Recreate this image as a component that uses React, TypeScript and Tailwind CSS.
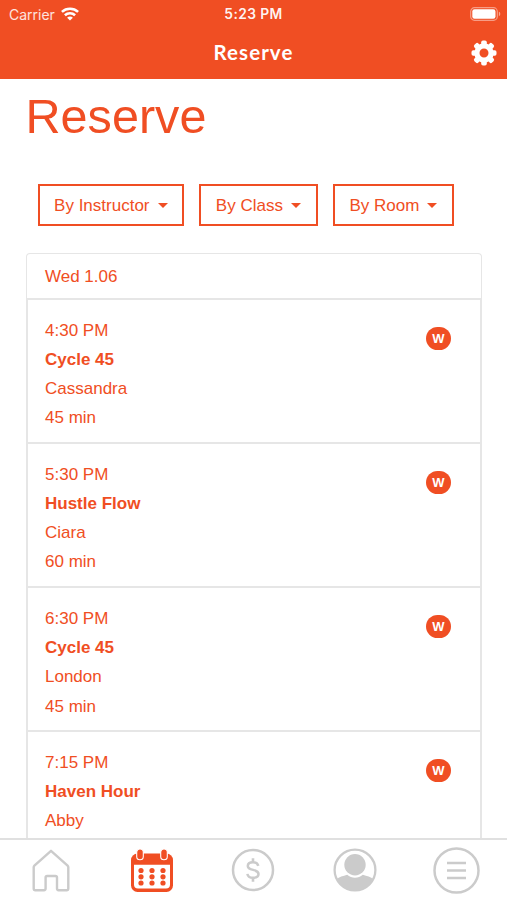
import { clsx } from "clsx";

interface ClassSession {
  time: string;
  name: string;
  instructor: string;
  duration?: string;
}

const sessions: ClassSession[] = [
  { time: "4:30 PM", name: "Cycle 45", instructor: "Cassandra", duration: "45 min" },
  { time: "5:30 PM", name: "Hustle Flow", instructor: "Ciara", duration: "60 min" },
  { time: "6:30 PM", name: "Cycle 45", instructor: "London", duration: "45 min" },
  { time: "7:15 PM", name: "Haven Hour", instructor: "Abby" },
];

const filters = [
  { label: "By Instructor", width: "w-[146.6px]" },
  { label: "By Class", width: "w-[118.6px]" },
  { label: "By Room", width: "w-[121.6px]" },
];

const WifiIcon = () => (
  <svg className="w-[18px] h-[14px]" viewBox="0 0 18 14" fill="none" stroke="white" strokeWidth="2.6">
    <path d="M0.9 4.9C5.5.7 12.5.7 17.1 4.9" />
    <path d="M3.9 8.3C6.8 5.6 11.2 5.6 14.1 8.3" />
    <path d="M9 13.6 6.1 10.7C7.8 9.2 10.2 9.2 11.9 10.7Z" fill="white" stroke="none" />
  </svg>
);

const BatteryIcon = () => (
  <svg className="w-[31px] h-[14px]" viewBox="0 0 31 14" fill="none">
    <rect x="0.7" y="0.7" width="26.6" height="12.6" rx="3.8" stroke="white" strokeOpacity=".45" strokeWidth="1.2" />
    <rect x="2.3" y="2.3" width="23.2" height="9.4" rx="2.2" fill="white" />
    <path d="M28.9 4.8C30.7 5.4 30.7 8.6 28.9 9.2Z" fill="white" fillOpacity=".5" />
  </svg>
);

const GearIcon = () => (
  <svg className="w-[26px] h-[26px]" viewBox="0 0 26 26">
    <g fill="white">
      {[0, 45, 90, 135].map((angle) => (
        <rect key={angle} x="10.2" y="0.5" width="5.6" height="25" rx="1.8" transform={`rotate(${angle} 13 13)`} />
      ))}
    </g>
    <circle cx="13" cy="13" r="7.1" fill="#f04e23" stroke="white" strokeWidth="5.2" />
  </svg>
);

const HomeIcon = () => (
  <svg className="w-[38px] h-[43px]" viewBox="0 0 38 43" fill="none" stroke="#cbcbcb" strokeWidth="2.4" strokeLinejoin="round">
    <path d="M19 1.8 35.6 16.6Q36.3 17.3 36.3 18.3V39.5Q36.3 41.2 34.6 41.2H26.6Q25 41.2 25 39.6V28.6Q25 27 23.4 27H15.2Q13.6 27 13.6 28.6V39.6Q13.6 41.2 12 41.2H3.4Q1.7 41.2 1.7 39.5V18.3Q1.7 17.3 2.4 16.6Z" />
  </svg>
);

const CalendarIcon = () => (
  <svg className="w-[42px] h-[43px]" viewBox="0 0 42 43">
    <rect x="0" y="4.6" width="42" height="38.4" rx="6.5" fill="#f04e23" />
    <path d="M3 15.8H39V35.5Q39 39.6 35 39.6H7Q3 39.6 3 35.5Z" fill="white" />
    {[9, 33].map((x) => (
      <rect key={x} x={x - 3.3} y="0" width="6.6" height="10.8" rx="3.3" fill="#f04e23" stroke="white" strokeWidth="1.1" />
    ))}
    <g fill="#f04e23">
      {[21.5, 27.8, 34].map((y) =>
        [10, 21, 32].map((x) => <circle key={`${x}-${y}`} cx={x} cy={y} r="2.6" />),
      )}
    </g>
  </svg>
);

const DollarIcon = () => (
  <svg className="w-[44px] h-[44px]" viewBox="0 0 44 44" fill="none" stroke="#cbcbcb" strokeWidth="2.5">
    <circle cx="22" cy="22" r="20" />
    <path d="M22 10.3V14.5M22 29.5V33.7" strokeWidth="2.6" />
    <path d="M27.3 17.8C26.6 15.4 24.6 14.2 22 14.2C19 14.2 16.8 15.6 16.8 17.9C16.8 23.3 27.5 20.5 27.5 26C27.5 28.4 25.2 29.8 22 29.8C18.9 29.8 16.8 28.5 16.4 25.9" />
  </svg>
);

const ProfileIcon = () => (
  <svg className="w-[44px] h-[44px]" viewBox="0 0 44 44">
    <circle cx="22" cy="22" r="20.4" fill="none" stroke="#cbcbcb" strokeWidth="2.3" />
    <circle cx="22" cy="16.8" r="10.7" fill="#cbcbcb" />
    <path d="M3.4 31.5C6.2 28.8 10 27.9 14.2 26.7C18.7 30.7 25.3 30.7 29.8 26.7C34 27.9 37.8 28.8 40.6 31.5A21 21 0 0 1 3.4 31.5Z" fill="#cbcbcb" />
  </svg>
);

const MenuIcon = () => (
  <svg className="w-[47px] h-[47px]" viewBox="0 0 47 47" fill="none" stroke="#cbcbcb" strokeWidth="2.5">
    <circle cx="23.5" cy="23.5" r="22" />
    <path d="M14 16.1H33M14 23.5H33M14 30.9H33" />
  </svg>
);

const Header = () => (
  <header className="h-[79px] shrink-0 bg-[#f04e23] text-white">
    <div className="grid h-[28px] grid-cols-3 items-center pl-[9px] pr-[6px] font-[Inter]">
      <div className="flex items-center gap-[6px] text-[14px] text-white/85">
        Carrier <WifiIcon />
      </div>
      <div className="pr-[3px] text-center text-[13.8px] font-semibold tracking-[0.4px] text-white/95">5:23 PM</div>
      <div className="flex justify-end"><BatteryIcon /></div>
    </div>
    <div className="grid h-[49px] grid-cols-3 items-center pr-[10px]">
      <h2 className="col-start-2 pl-[10px] text-center font-[Lato] text-[20.5px] font-bold tracking-[1.05px]">Reserve</h2>
      <button className="flex justify-end" aria-label="Settings"><GearIcon /></button>
    </div>
  </header>
);

const SessionRow = ({ session }: { session: ClassSession }) => (
  <li className="flex h-[144.1px] shrink-0 justify-between border-x-2 border-t-2 border-[#e6e6e6] pl-[17.5px] pr-[29px] pt-[15.5px]">
    <div className="leading-[29.3px]">
      <p>{session.time}</p>
      <p className="font-bold">{session.name}</p>
      <p>{session.instructor}</p>
      {session.duration && <p>{session.duration}</p>}
    </div>
    <span className="mt-[11.5px] flex h-[22.5px] w-[25px] items-center justify-center rounded-full bg-[#f04e23] text-[13px] font-bold text-white">
      W
    </span>
  </li>
);

const tabs = [
  { label: "Home", icon: <HomeIcon /> },
  { label: "Reserve", icon: <CalendarIcon />, active: true },
  { label: "Buy", icon: <DollarIcon /> },
  { label: "Profile", icon: <ProfileIcon /> },
  { label: "Menu", icon: <MenuIcon /> },
];

const App: React.FC = () => {
  return (
    <div className="flex h-[900px] w-[507px] flex-col overflow-hidden bg-white font-['Liberation_Sans',sans-serif] text-[17px] text-[#f04e23]">
      <Header />
      <main className="min-h-0 flex-1 overflow-hidden pl-[25.5px] pr-[25px]">
        <h1 className="mt-[9px] h-[56px] text-[48.6px] leading-[56px]">Reserve</h1>
        <div className="mt-[40px] flex gap-[15px] pl-[12px]">
          {filters.map((filter) => (
            <button
              key={filter.label}
              className={clsx(
                "flex h-[42px] items-center justify-center gap-[8px] whitespace-nowrap border-2 border-[#f04e23] pt-px",
                filter.width,
              )}
            >
              {filter.label}
              <span className="border-x-[5px] border-t-[5px] border-x-transparent border-t-[#f04e23]" />
            </button>
          ))}
        </div>
        <section className="mt-[27px]">
          <div className="flex h-[45px] items-center rounded-t border border-b-0 border-[#e6e6e6] pl-[18.5px] pt-px">
            Wed 1.06
          </div>
          <ul>
            {sessions.map((session) => (
              <SessionRow key={session.time} session={session} />
            ))}
          </ul>
        </section>
      </main>
      <nav className="grid h-[62px] shrink-0 grid-cols-5 border-t-2 border-[#e0e0e0] bg-white">
        {tabs.map((tab) => (
          <button
            key={tab.label}
            aria-label={tab.label}
            aria-current={tab.active ? "page" : undefined}
            className="flex items-center justify-center"
          >
            {tab.icon}
          </button>
        ))}
      </nav>
    </div>
  );
};

export default App;
